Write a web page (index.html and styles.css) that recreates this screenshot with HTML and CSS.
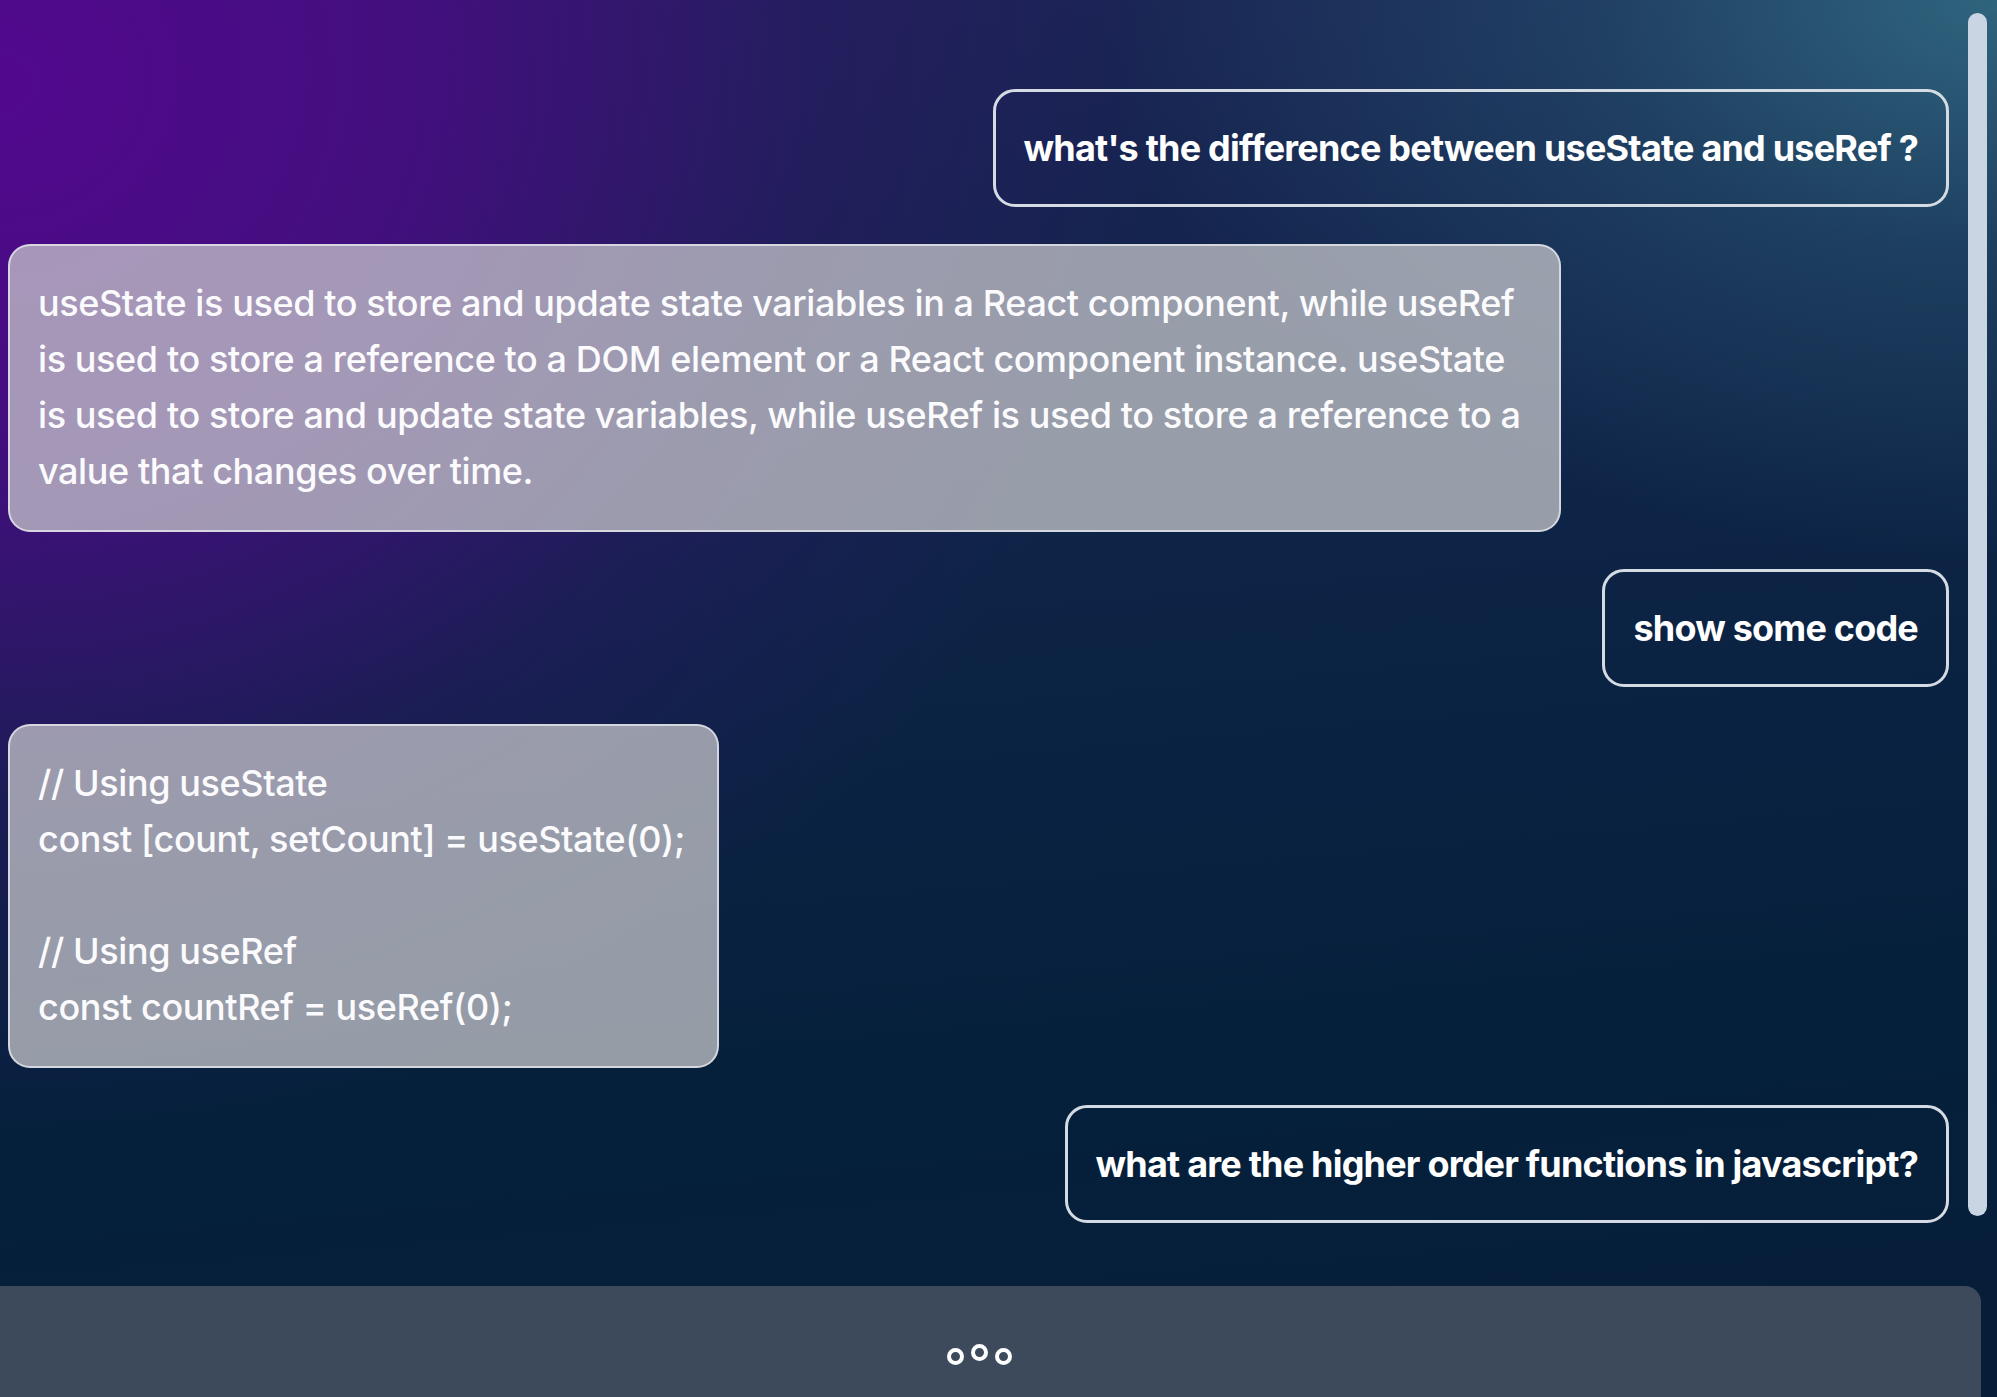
FILE: index.html
```html
<!DOCTYPE html>
<html lang="en">
<head>
<meta charset="utf-8">
<title>Chat</title>
<link rel="stylesheet" href="styles.css">
</head>
<body>
<div class="app">
  <div class="chat-area">
    <div class="messages">
      <div class="msg msg-user">what's the difference between useState and useRef ?</div>
      <div class="msg msg-bot">useState is used to store and update state variables in a React component, while useRef is used to store a reference to a DOM element or a React component instance. useState is used to store and update state variables, while useRef is used to store a reference to a value that changes over time.</div>
      <div class="msg msg-user">show some code</div>
      <div class="msg msg-bot msg-code">// Using useState
const [count, setCount] = useState(0);

// Using useRef
const countRef = useRef(0);</div>
      <div class="msg msg-user">what are the higher order functions in javascript?</div>
    </div>
    <div class="scroll-track"><div class="scroll-thumb"></div></div>
  </div>
  <div class="input-bar">
    <div class="typing">
      <span class="dot"></span>
      <span class="dot dot-up"></span>
      <span class="dot"></span>
    </div>
  </div>
</div>
</body>
</html>
```
FILE: styles.css
```css
html, body {
  margin: 0;
  padding: 0;
  height: 100%;
}
body {
  overflow: hidden;
  font-family: Inter, "Noto Sans", sans-serif;
  color: #ffffff;
  background:
    radial-gradient(ellipse 45% 40% at 100% 0%, rgba(48, 104, 128, 0.95) 0%, rgba(40, 90, 115, 0.5) 45%, rgba(20, 50, 80, 0) 100%),
    radial-gradient(ellipse 58% 75% at 0% 6%, #52088e 0%, rgba(76, 10, 136, 0.82) 35%, rgba(60, 15, 120, 0.3) 70%, rgba(40, 20, 100, 0) 100%),
    linear-gradient(175deg, #1c2456 0%, #0e2447 40%, #05203b 75%, #071d38 100%);
}
.app {
  height: 1397px;
  display: flex;
  flex-direction: column;
  overflow: hidden;
}
.chat-area {
  display: flex;
  height: 1286px;
  flex-shrink: 0;
}
.messages {
  flex: 1;
  display: flex;
  flex-direction: column;
  align-items: flex-start;
  gap: 37px;
  padding: 89px 0 0 8px;
}
.scroll-track {
  width: 19px;
  margin: 13px 10px 0 19px;
}
.scroll-thumb {
  height: 1203px;
  border-radius: 10px;
  background: #c9d5e3;
}
.msg {
  font-size: 36px;
  line-height: 56px;
  border-radius: 22px;
  box-sizing: border-box;
}
.msg-user {
  align-self: flex-end;
  font-weight: 700;
  letter-spacing: -0.8px;
  border: 3px solid #d5dbe3;
  padding: 28px 28px 28px 28px;
  color: #ffffff;
}
.msg-bot {
  max-width: 80%;
  font-weight: 500;
  letter-spacing: -0.4px;
  background: rgba(200, 200, 204, 0.74);
  border: 2px solid rgba(225, 226, 232, 0.85);
  padding: 29px 28px 31px 28px;
  color: #fbfbfd;
}
.msg-code {
  white-space: pre-line;
  padding: 29px 32px 31px 28px;
}
.input-bar {
  height: 134px;
  flex-shrink: 0;
  width: 1981px;
  background: #3d4a5c;
  border-top-right-radius: 16px;
  display: flex;
  justify-content: center;
  align-items: center;
}
.typing {
  display: flex;
  align-items: center;
  gap: 7px;
  margin: 6px 0 0 -22px;
}
.dot {
  width: 9px;
  height: 9px;
  border: 4px solid #ffffff;
  border-radius: 50%;
}
.dot-up {
  transform: translateY(-4px);
}
```
